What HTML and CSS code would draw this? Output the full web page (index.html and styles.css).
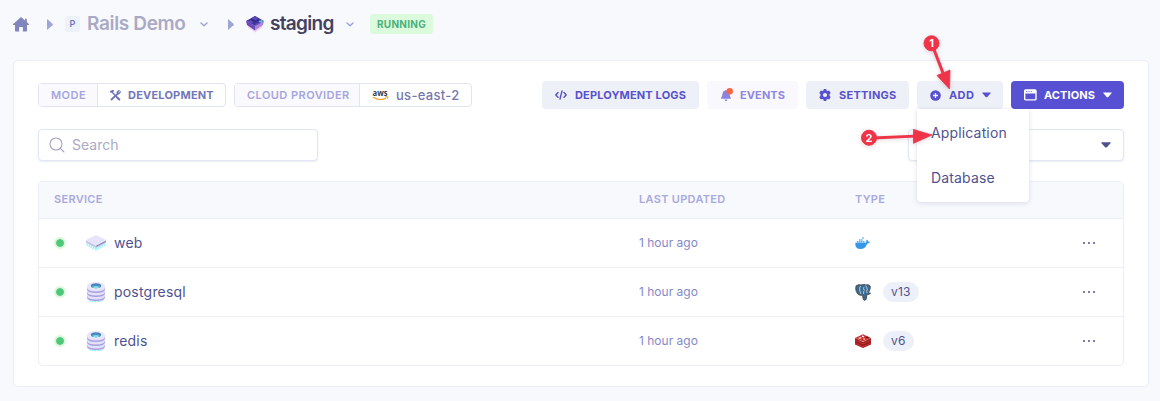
FILE: index.html
```html
<!DOCTYPE html>
<html lang="en">
<head>
<meta charset="utf-8">
<title>staging</title>
<link rel="stylesheet" href="styles.css">
</head>
<body>
<svg class="defs" width="0" height="0">
  <symbol id="caret" viewBox="0 0 10 6"><path d="M.7.2h8.6q.7 0 .4.7L5.9 5.2q-.9.8-1.8 0L.3.9Q0 .2.7.2z" fill="currentColor"/></symbol>
  <symbol id="play" viewBox="0 0 6 11"><path d="M0 .8Q0 0 .7.4L5.5 4.800q.6.7 0 1.400L.7 10.600Q0 11 0 10.200z" fill="currentColor"/></symbol>
  <symbol id="chev" viewBox="0 0 8 5"><path d="M1 1l3 2.800L7 1" fill="none" stroke="currentColor" stroke-width="1.400" stroke-linecap="round" stroke-linejoin="round"/></symbol>
  <symbol id="db" viewBox="0 0 20 22">
    <path d="M2 17.500q1 3 8 3t8-3" fill="none" stroke="#8cf0ee" stroke-width="1.500" stroke-dasharray="1.500 1"/>
    <path d="M1 5v11.500Q2 20 10 20t9-3.500V5z" fill="#e3e1fa"/>
    <path d="M1 7.200q1.500 3.300 9 3.300t9-3.300v1.500q-1.500 3.300-9 3.300T1 8.700zM1 11.200q1.500 3.300 9 3.300t9-3.300v1.500q-1.500 3.300-9 3.300t-9-3.300zM1 15.200q1.500 3.300 9 3.300t9-3.300v1.500Q17.500 20 10 20t-9-3.300z" fill="#a8a0df"/>
    <ellipse cx="10" cy="5" rx="9" ry="4" fill="#e7e7fa"/>
    <ellipse cx="10" cy="4.800" rx="5.200" ry="2.500" fill="#4d87bf"/>
    <path d="M6 6q4-2.200 8 0-4 2.400-8 0z" fill="#7ce0e6"/>
  </symbol>
</svg>

<header class="crumbs">
  <svg class="home" viewBox="0 0 16 15"><path d="M8 0 12 3.500V1.800h1.800V5L16 7.200q.3.900-.6.900H14v5.700q0 .7-.7.700H9.900V10H6.100v4.500H2.700q-.7 0-.7-.7V8.100H.6q-.9 0-.6-.9z" fill="#7f85bd"/></svg>
  <svg class="play play-a"><use href="#play"/></svg>
  <span class="badge-p">P</span>
  <span class="title project">Rails Demo</span>
  <svg class="chev chev-a"><use href="#chev"/></svg>
  <svg class="play play-b"><use href="#play"/></svg>
  <svg class="cube" viewBox="0 0 18 17">
    <path d="M2 9l7 5 7-5v2.500l-7 5-7-5z" fill="#eed3f3"/>
    <path d="M0 5l9 5v4.500L1 9z" fill="#6b48b8"/><path d="M18 5l-9 5v4.500L17 9z" fill="#b183d6"/>
    <path d="M0 5l4.500-2.500L9 0l4.500 2.500L18 5l-9 5z" fill="#4434a0"/>
    <path d="M5 2.300L9 0l4 2.300-4 2.500z" fill="#5949b7"/><path d="M5 2.300l4 2.500v2L5 4.500z" fill="#30246e"/><path d="M13 2.300L9 4.800v2l4-2.300z" fill="#3b2b9b"/>
    <path d="M1 5.500l4-1.300 3 1.800-3 1.500zM9 8l3-1.500 2 1-4 2z" fill="#5c4cc4"/>
    <path d="M12.500 5.300l3-1.300 1.800 1-3.300 1.800z" fill="#5bc8ec"/>
  </svg>
  <span class="title env">staging</span>
  <svg class="chev chev-b"><use href="#chev"/></svg>
  <span class="status">RUNNING</span>
</header>

<main class="card">
  <div class="toolbar">
    <div class="pill mode"><span class="key">MODE</span><span class="value">
      <svg width="11" height="11" viewBox="0 0 11 11" fill="none" stroke="#6a71b4" stroke-linecap="round"><path d="M2 2l6.500 7" stroke-width="1.300"/><path d="M1 1.700l2-.8M7.200 7.500l2.100 2" stroke-width="2"/><path d="M1.500 9.500L7.500 3.800" stroke-width="1.800"/><path d="M9 .6L7.200 2.300l1.400 1.500 1.700-1.700" stroke-width="1.400"/></svg>
      <b>DEVELOPMENT</b></span></div>
    <div class="pill cloud"><span class="key">CLOUD PROVIDER</span><span class="value">
      <svg class="aws" width="18" height="16" viewBox="0 0 18 16"><text x="0.500" y="8.500" textLength="15" lengthAdjust="spacingAndGlyphs">aws</text><path d="M1 10.300q6.500 4 13 .9" fill="none" stroke="#f6a02d" stroke-width="1.300"/><path d="M13 9.800l3-.1-.6 2.300" fill="none" stroke="#f6a02d"/></svg>
      <span class="region">us-east-2</span></span></div>
    <div class="buttons">
      <button class="btn logs"><svg width="12" height="10" viewBox="0 0 12 10" fill="none" stroke="currentColor" stroke-width="1.400" stroke-linecap="round" stroke-linejoin="round"><path d="M3 2.500L.8 5 3 7.300M9 2.500L11.200 5 9 7.300M7 1L5 9"/></svg><span>DEPLOYMENT LOGS</span></button>
      <button class="btn events"><svg width="14" height="14" viewBox="0 0 14 14"><path d="M5 2.500q1-.8 2 0 2.600.7 2.600 3.600 0 2.100 1.200 3.700.3.900-.6.900H1.600q-.9 0-.5-.9 1.300-1.600 1.300-3.700 0-2.900 2.600-3.600zM4.500 11.400h3Q7.300 13 6 13t-1.500-1.600z" fill="#8a84df"/><circle cx="9.700" cy="3.300" r="3.200" fill="#fa643f"/></svg><span>EVENTS</span></button>
      <button class="btn settings"><svg width="12" height="12" viewBox="0 0 12 12"><path fill-rule="evenodd" d="M4.800 0h2.400l.4 1.600 1 .5L10.200 1.600l1.500 2.300L10.600 5v2l1.100 1.100-1.500 2.300-1.600-.5-1 .5L7.200 12H4.800l-.4-1.600-1-.5-1.600.5L.3 8.100 1.400 7V5L.3 3.900 1.800 1.600l1.600.5 1-.5zM6 3.900a2.100 2.100 0 1 0 0 4.200 2.100 2.100 0 1 0 0-4.200z" fill="currentColor"/></svg><span>SETTINGS</span></button>
      <div class="add-wrap">
        <button class="btn add"><svg width="11" height="11" viewBox="0 0 11 11"><circle cx="5.500" cy="5.500" r="5.300" fill="currentColor"/><path d="M5.500 3v5M3 5.500h5" stroke="#edf0f9" stroke-width="1.300"/></svg><span>ADD</span><svg class="caret"><use href="#caret"/></svg></button>
        <div class="menu"><a>Application</a><a>Database</a></div>
      </div>
      <button class="btn actions"><svg width="13" height="12" viewBox="0 0 13 12"><rect x=".7" y=".9" width="11.300" height="10" rx="1" fill="none" stroke="#fff" stroke-width="1.400"/><path d="M1 1h11v3.500H1z" fill="#fff"/><path d="M2.300 2.600h1M4.500 2.600h1M6.700 2.600h1" stroke="#5850d4"/></svg><span>ACTIONS</span><svg class="caret"><use href="#caret"/></svg></button>
    </div>
  </div>

  <div class="filters">
    <div class="field search"><svg width="16" height="16" viewBox="0 0 16 16" fill="none" stroke="#a3a4c1" stroke-width="1.100" stroke-linecap="round"><circle cx="7" cy="7" r="6"/><path d="M11.400 11.400L15 15"/></svg><span>Search</span></div>
    <div class="field select"><svg class="caret"><use href="#caret"/></svg></div>
  </div>

  <div class="table">
    <div class="row head"><span>SERVICE</span><span>LAST UPDATED</span><span>TYPE</span></div>
    <div class="row">
      <div class="service"><i class="dot"></i><svg width="20" height="22" viewBox="0 0 20 22"><path d="M1 11.500l8 4.500q1 .5 2 0l8-4.500" fill="none" stroke="#a6f3f0" stroke-width="4" stroke-dasharray="1.700 .6"/><path d="M0 8l10 5.500L20 8v2.500l-9 4.700q-1 .5-2 0l-9-4.700z" fill="#c3bdea"/><path d="M0 8.800q-.2-.8.800-1.300L9 3.400q1-.5 2 0l8.200 4.100q1 .5.800 1.300L11 13.500q-1 .5-2 0z" fill="#e6e4fa"/><path d="M10 14.400L20 9.300" stroke="#827cbd" fill="none"/></svg><span>web</span></div>
      <div class="time">1 hour ago</div>
      <div class="type"><svg class="docker" width="16" height="13" viewBox="0 0 16 13"><path d="M.3 5.700H10.500q1.200 0 .8-2.600l.5-.6q1 .6 1.200 2 1.300-.3 2 .2-.6 1.700-2.700 1.700-2 5.600-7 5.600Q0 12 .3 5.700z" fill="#3497e8"/><path d="M1.800 4h1.800v1.700H1.800zM4 4h1.600v1.700H4zM6 4h1.600v1.700H6zM8 4h1.600v1.700H8zM4 2.200h1.600v1.500H4zM6 2.200h1.600v1.500H6zM7.200.3h1.600v1.500H7.200z" fill="#62b4ef"/></svg></div>
      <div class="more"><i></i><i></i><i></i></div>
    </div>
    <div class="row">
      <div class="service"><i class="dot"></i><svg width="20" height="22"><use href="#db"/></svg><span>postgresql</span></div>
      <div class="time">1 hour ago</div>
      <div class="type"><svg width="16" height="17" viewBox="0 0 16 17"><path d="M1 2q2-2 5-1 3-1 5 0 3-1 4.200 1.300.6 2-1.700 6.200 1 .8 2 .5-.6 1.700-3.700 1.700l-.4 4q-.8 2-2.200 1.500-1.500-.3-1.500-5.200-2.400.8-3.700-.3Q0 8.500 1 2z" fill="#386a93" stroke="#4c5057"/><path d="M5.600 2q-1.500 1.500-.7 5l1 3M10.500 1.500q2 2 1.700 4.500-.7 1-.2 3M9 3q-1 2 .3 3.500Q8 7.500 8.700 10" fill="none" stroke="#d5e2eb" stroke-width=".8"/></svg><span class="version">v13</span></div>
      <div class="more"><i></i><i></i><i></i></div>
    </div>
    <div class="row">
      <div class="service"><i class="dot"></i><svg width="20" height="22"><use href="#db"/></svg><span>redis</span></div>
      <div class="time">1 hour ago</div>
      <div class="type"><svg width="16" height="14" viewBox="0 0 16 14"><path d="M0 4l8 4 8-4v6.500l-8 3.500-8-3.500z" fill="#941e1e"/><path d="M0 6.400l8 3.500 8-3.500M0 9.200l8 3.500 8-3.500" fill="none" stroke="#d13232"/><path d="M0 4l8-3.700L16 4 8 7.600z" fill="#cf2e2e"/><path d="M7 1.300l1 .6 1.500-.1-.8.900.3.800-1.300-.4-1.200.2.500-.9zM3 4l2.200-.8L7 4l-2.200.8zM8 4.700l2.500-.3L9 6z" fill="#fff"/><path d="M10.500 3.300l2-.7 1.500.8-2 .8z" fill="#681111"/></svg><span class="version">v6</span></div>
      <div class="more"><i></i><i></i><i></i></div>
    </div>
  </div>
</main>

<svg class="callouts" width="110" height="120" viewBox="850 30 110 120">
  <g fill="#ef3348" stroke="#ef3348">
    <circle cx="931.500" cy="43.300" r="7.500"/><path d="M933 47l10 26" stroke-width="3"/><path d="M937 75.500l13-5.500-.5 19z" stroke-width=".8"/>
    <circle cx="869" cy="137.700" r="7.500"/><path d="M873 138l42-1.800" stroke-width="2.800"/><path d="M913.500 129.500v13.800l18.500-8.300z" stroke-width=".8"/>
  </g>
  <text x="931.500" y="47.200">1</text><text x="869" y="141.700">2</text>
</svg>
</body>
</html>
```

FILE: styles.css
```css
* { box-sizing: border-box; }
body { margin: 0; height: 401px; overflow: hidden; background: #f8f9fd; color: #50528f; font-family: Inter, "Liberation Sans", sans-serif; position: relative; }
svg { display: block; flex: none; }
.defs { position: absolute; }

.crumbs { height: 60px; padding: 0 0 12px 13px; display: flex; align-items: center; }
.home { width: 16px; height: 15px; }
.play { width: 6px; height: 11px; color: #a0a5d6; }
.play-a { margin-left: 18px; }
.play-b { margin-left: 20px; }
.badge-p { width: 15px; height: 16px; margin-left: 12px; border-radius: 3px; background: #edf1f8; color: #7075c7; font-size: 9px; font-weight: 600; line-height: 16px; text-align: center; }
.title { font-size: 19px; font-weight: 600; line-height: 28px; letter-spacing: -.35px; white-space: nowrap; }
.project { width: 105px; margin-left: 7px; color: #aaa9c5; }
.env { width: 66px; margin-left: 6px; color: #43425d; letter-spacing: -.7px; }
.chev { width: 8px; height: 5px; color: #9ca1de; }
.chev-a { margin-left: 8px; }
.chev-b { margin-left: 10px; }
.cube { width: 18px; height: 17px; margin-left: 12px; }
.status { width: 63px; height: 20px; margin-left: 16px; border-radius: 3px; background: #dcfadc; color: #4bb17c; font-size: 10px; font-weight: 700; line-height: 20px; letter-spacing: .3px; text-align: center; }

.card { width: 1136px; height: 327px; margin-left: 13px; padding: 20px 24px; border: 1px solid #ebedf7; border-radius: 5px; background: #fff; }
.toolbar { height: 28px; display: flex; align-items: center; }
.pill { height: 24px; display: flex; border: 1px solid #e1e5f3; border-radius: 4px; overflow: hidden; font-size: 11px; font-weight: 600; letter-spacing: .45px; line-height: 22px; white-space: nowrap; }
.mode { width: 188px; }
.cloud { width: 238px; margin-left: 8px; }
.key { padding-left: 12px; background: #faf9fe; color: #a5a5dd; border-right: 1px solid #e1e5f3; }
.mode .key { width: 59px; }
.cloud .key { width: 125px; }
.value { display: flex; align-items: center; padding-left: 12px; color: #7377b9; }
.value b { margin-left: 7px; font-weight: 700; letter-spacing: .2px; }
.region { margin-left: 6px; font-size: 13px; font-weight: 500; letter-spacing: .3px; color: #7777ab; }
.aws text { font: 700 8px "Open Sans", sans-serif; fill: #30394b; letter-spacing: 0; }

.buttons { margin-left: auto; display: flex; gap: 8px; }
.btn { height: 28px; padding: 0 0 0 13px; border: 0; border-radius: 4px; background: #edf0f7; color: #5850cf; display: flex; align-items: center; font-family: inherit; font-size: 11px; font-weight: 700; letter-spacing: .4px; line-height: 28px; white-space: nowrap; }
.btn span { margin-left: 8px; }
.logs { width: 157px; letter-spacing: .15px; }
.events { width: 91px; background: #f9f9fd; color: #8f88e1; letter-spacing: .1px; }
.events span { margin-left: 6px; }
.settings { width: 103px; letter-spacing: .25px; }
.add { width: 86px; }
.actions { width: 113px; background: #5850d2; color: #fff; letter-spacing: .1px; }
.actions span { margin-left: 7px; }
.caret { width: 9px; height: 6px; }
.btn .caret { margin-left: 8px; }
.add-wrap { position: relative; }
.menu { position: absolute; z-index: 2; top: 28px; left: 0; width: 112px; height: 93px; padding: 1px 14px 0; border-radius: 0 0 4px 4px; background: #fff; box-shadow: 0 1px 5px rgba(70, 70, 120, .18); font-size: 14px; line-height: 45px; letter-spacing: .15px; }
.menu a { display: block; }

.filters { margin-top: 20px; display: flex; justify-content: space-between; }
.field { height: 32px; display: flex; align-items: center; border: 1px solid #e1e6f4; border-radius: 4px; background: #fff; box-shadow: 0 1px 2px rgba(80, 90, 150, .1); }
.search { width: 280px; padding-left: 10px; gap: 7px; color: #aaaac4; font-size: 14px; letter-spacing: 0; }
.search span { padding-bottom: 2px; }
.select { width: 216px; padding-right: 12px; justify-content: flex-end; }
.select .caret { width: 10px; }

.table { height: 185px; margin-top: 20px; border: 1px solid #ebedf7; border-radius: 5px; overflow: hidden; }
.row { height: 49px; padding: 0 28px 0 15px; display: grid; grid-template-columns: 585px 216px 1fr 12px; align-items: center; border-top: 1px solid #ebedf8; }
.head { height: 36px; padding-bottom: 2px; border-top: 0; background: #f8f9fd; color: #a9a9dd; font-size: 11px; font-weight: 600; letter-spacing: .3px; }
.service { display: flex; align-items: center; font-size: 14px; letter-spacing: .2px; }
.dot { width: 12px; height: 12px; border: 2px solid #dcf8dc; border-radius: 50%; background: #51c779; background-clip: padding-box; }
.service svg { margin-left: 20px; }
.service span { margin-left: 8px; padding-bottom: 2px; }
.time { padding-bottom: 2px; color: #8589c7; font-size: 12px; }
.type { display: flex; align-items: center; }
.version { height: 20px; margin-left: 12px; padding: 0 8px; border-radius: 10px; background: #edf0f8; font-size: 12px; line-height: 20px; letter-spacing: .2px; }
.more { display: flex; justify-content: space-between; }
.more i { width: 2px; height: 2px; border-radius: 1px; background: #50528f; }

.callouts { position: absolute; z-index: 3; left: 850px; top: 30px; filter: drop-shadow(0 1px 2px rgba(90, 30, 50, .2)); }
.callouts text { fill: #fff; font: 700 11px Inter, sans-serif; text-anchor: middle; }
```
